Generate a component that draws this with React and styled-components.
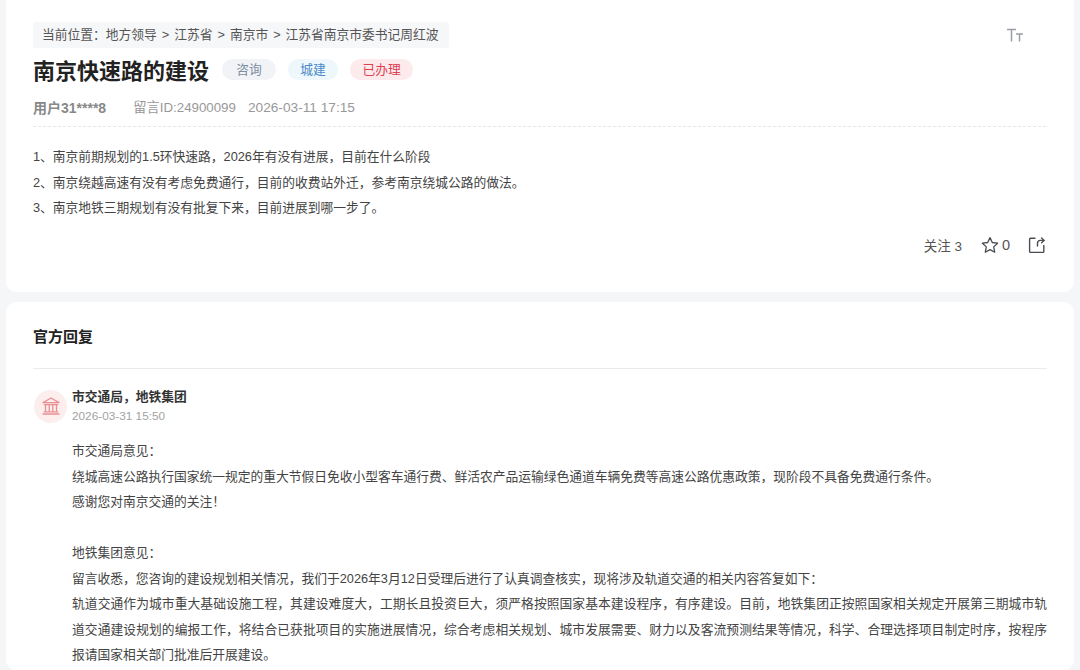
import React from 'react';
import styled, { createGlobalStyle } from 'styled-components';

const GlobalStyle = createGlobalStyle`
  html, body {
    margin: 0;
    padding: 0;
    height: 670px;
    overflow: hidden;
    background: #f5f6f8;
    font-family: "Liberation Sans", "Noto Sans CJK SC", sans-serif;
  }
`;

const App = () => {
  return (
    <Page>
      <GlobalStyle />
      <TopCard>
        <FontSizeIcon viewBox="0 0 18 16" fill="none" stroke="#9a9ea6">
          <path d="M1 2.5h9M5.5 2.5V14.5" strokeWidth="1.5" />
          <path d="M10 7h7M13.5 7v7.5" strokeWidth="1.5" />
        </FontSizeIcon>
        <Breadcrumb>
          当前位置：地方领导<Sep>&gt;</Sep>江苏省<Sep>&gt;</Sep>南京市<Sep>&gt;</Sep>江苏省南京市委书记周红波
        </Breadcrumb>
        <TitleRow>
          <Title>南京快速路的建设</Title>
          <Tag $bg="#f1f3f7" $color="#7f8ea3" $width={54}>咨询</Tag>
          <Tag $bg="#eef7fc" $color="#4a8ac9" $width={50}>城建</Tag>
          <Tag $bg="#fdeaec" $color="#df3f52" $width={63}>已办理</Tag>
        </TitleRow>
        <Meta>
          <UserName>用户31****8</UserName>
          <MessageId>留言ID:24900099</MessageId>
          <span>2026-03-11 17:15</span>
        </Meta>
        <Question>
          <p>1、南京前期规划的1.5环快速路，2026年有没有进展，目前在什么阶段</p>
          <p>2、南京绕越高速有没有考虑免费通行，目前的收费站外迁，参考南京绕城公路的做法。</p>
          <p>3、南京地铁三期规划有没有批复下来，目前进展到哪一步了。</p>
        </Question>
        <Actions>
          <span>关注 3</span>
          <ActionItem>
            <svg width="18" height="18" viewBox="0 0 18 18" fill="none" stroke="#4a4d52" strokeWidth="1.3" strokeLinejoin="round">
              <path d="M9 1.6l2.3 4.9 5.3.7-3.9 3.7 1 5.3L9 13.6l-4.7 2.6 1-5.3-3.9-3.7 5.3-.7z" />
            </svg>
            <span>0</span>
          </ActionItem>
          <svg width="18" height="18" viewBox="0 0 18 18" fill="none" stroke="#4a4d52" strokeWidth="1.4" strokeLinecap="round" strokeLinejoin="round">
            <path d="M7 2.2H2.6a1 1 0 0 0-1 1v12.2a1 1 0 0 0 1 1h12.2a1 1 0 0 0 1-1V9.5" />
            <path d="M9.5 10V7.2c0-1.6 1.2-2.8 2.8-2.8h3.6" />
            <path d="M13.6 2l2.5 2.4-2.5 2.4" />
          </svg>
        </Actions>
      </TopCard>
      <ReplyCard>
        <ReplyHeading>官方回复</ReplyHeading>
        <Department>
          <Avatar>
            <svg width="20" height="20" viewBox="0 0 20 20" fill="none" stroke="#e88f94" strokeWidth="1.3" strokeLinejoin="round">
              <path d="M10 2L18 6.6H2z" />
              <path d="M2.8 8.6h14.4" />
              <path d="M4.5 8.6v7.2M8.2 8.6v7.2M11.8 8.6v7.2M15.5 8.6v7.2" />
              <path d="M2.8 15.9h14.4M1.5 18h17" />
            </svg>
          </Avatar>
          <div>
            <DepartmentName>市交通局，地铁集团</DepartmentName>
            <DepartmentDate>2026-03-31 15:50</DepartmentDate>
          </div>
        </Department>
        <ReplyBody>
          <p>市交通局意见：</p>
          <p>绕城高速公路执行国家统一规定的重大节假日免收小型客车通行费、鲜活农产品运输绿色通道车辆免费等高速公路优惠政策，现阶段不具备免费通行条件。</p>
          <p>感谢您对南京交通的关注！</p>
          <p>&nbsp;</p>
          <p>地铁集团意见：</p>
          <p>留言收悉，您咨询的建设规划相关情况，我们于2026年3月12日受理后进行了认真调查核实，现将涉及轨道交通的相关内容答复如下：</p>
          <p>轨道交通作为城市重大基础设施工程，其建设难度大，工期长且投资巨大，须严格按照国家基本建设程序，有序建设。目前，地铁集团正按照国家相关规定开展第三期城市轨道交通建设规划的编报工作，将结合已获批项目的实施进展情况，综合考虑相关规划、城市发展需要、财力以及客流预测结果等情况，科学、合理选择项目制定时序，按程序报请国家相关部门批准后开展建设。</p>
        </ReplyBody>
      </ReplyCard>
    </Page>
  );
};

const Page = styled.div`
  width: 1080px;
  height: 670px;
  overflow: hidden;
  padding: 0 6px;
  box-sizing: border-box;
  display: flex;
  flex-direction: column;
  gap: 10px;
`;

const Card = styled.section`
  background: #fff;
  border-radius: 10px;
  box-sizing: border-box;
  flex-shrink: 0;
`;

const TopCard = styled(Card)`
  position: relative;
  height: 292px;
  padding: 22px 28px 0 27px;
  border-radius: 0 0 10px 10px;
`;

const FontSizeIcon = styled.svg`
  position: absolute;
  top: 27px;
  right: 50px;
  width: 18px;
  height: 16px;
`;

const Breadcrumb = styled.div`
  display: inline-block;
  height: 26px;
  line-height: 26px;
  padding: 0 10px 0 9px;
  background: #f6f7f9;
  border-radius: 2px;
  font-size: 12.75px;
  color: #555;
`;

const Sep = styled.span`
  margin: 0 5px;
`;

const TitleRow = styled.div`
  display: flex;
  align-items: center;
  margin-top: 3px;
  height: 36px;
`;

const Title = styled.h1`
  margin: 0 13px 0 0;
  font-size: 22px;
  font-weight: 700;
  color: #222;
`;

const Tag = styled.span`
  width: ${(p) => p.$width}px;
  height: 21px;
  line-height: 21px;
  margin-right: 12px;
  border-radius: 11px;
  background: ${(p) => p.$bg};
  color: ${(p) => p.$color};
  font-size: 12.75px;
  text-align: center;
`;

const Meta = styled.div`
  display: flex;
  gap: 12px;
  margin-top: 12px;
  padding-bottom: 9px;
  border-bottom: 1px dashed #e5e7ea;
  font-size: 13.7px;
  line-height: 18px;
  color: #999;
`;

const UserName = styled.span`
  font-size: 14px;
  font-weight: 700;
  color: #888;
  margin-right: 15px;
`;

const MessageId = styled.span`
  font-size: 13.3px;
`;

const Question = styled.div`
  margin-top: 17px;
  font-size: 12.75px;
  color: #444;

  p {
    margin: 0;
    line-height: 25.5px;
  }
`;

const Actions = styled.div`
  display: flex;
  justify-content: flex-end;
  align-items: center;
  gap: 18px;
  margin-top: 14px;
  font-size: 13.5px;
  color: #555;
`;

const ActionItem = styled.span`
  display: flex;
  align-items: center;
  gap: 3px;
  margin-left: 1px;
  font-size: 14.5px;
`;

const ReplyCard = styled(Card)`
  flex: 1;
  padding: 0 27px;
`;

const ReplyHeading = styled.h2`
  margin: 0;
  height: 66px;
  line-height: 69px;
  border-bottom: 1px solid #e9ebee;
  font-size: 15px;
  font-weight: 700;
  color: #222;
`;

const Department = styled.div`
  display: flex;
  align-items: center;
  gap: 5px;
  margin-top: 18px;
  margin-left: 1px;
`;

const Avatar = styled.div`
  width: 33px;
  height: 33px;
  border-radius: 50%;
  background: #fdeeee;
  display: flex;
  align-items: center;
  justify-content: center;
`;

const DepartmentName = styled.div`
  font-size: 12.75px;
  font-weight: 700;
  line-height: 20px;
  color: #333;
`;

const DepartmentDate = styled.div`
  font-size: 11.8px;
  line-height: 18px;
  color: #a3a3a3;
`;

const ReplyBody = styled.div`
  margin-top: 13px;
  padding-left: 39px;
  font-size: 12.75px;
  color: #444;
  text-align: justify;

  p {
    margin: 0;
    line-height: 25.5px;
  }
`;

export default App;
